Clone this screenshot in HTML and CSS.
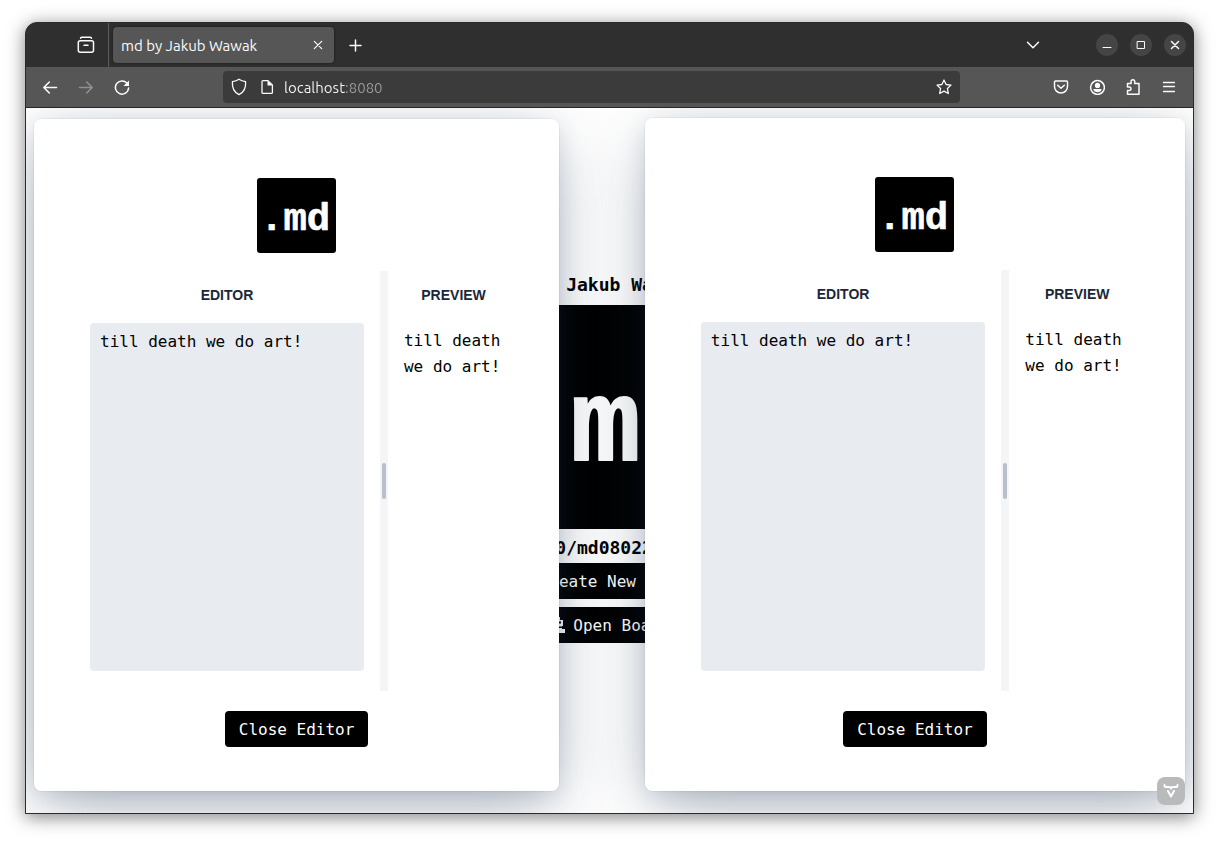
FILE: index.html
```html
<!DOCTYPE html>
<html lang="en">
<head>
<meta charset="utf-8">
<title>md by Jakub Wawak</title>
<link rel="stylesheet" href="styles.css">
</head>
<body>
<div class="window">
  <header class="tabbar">
    <button class="icon-btn recent" aria-label="Recent browsing">
      <svg width="18" height="18" viewBox="0 0 18 18"><path d="M3.5 2.2Q3.9 1.2 5 1.2H13Q14.1 1.2 14.5 2.2"/><rect x="1.3" y="4.7" width="15.2" height="11.5" rx="2"/><path d="M7 9.3h4"/></svg>
    </button>
    <div class="tab">
      <span class="tab-title">md by Jakub Wawak</span>
      <button class="tab-close" aria-label="Close tab"><svg width="10" height="10" viewBox="0 0 10 10"><path d="M1.300 1.300l7.400 7.400M8.700 1.300l-7.400 7.400"/></svg></button>
    </div>
    <button class="icon-btn new-tab" aria-label="New tab"><svg width="14" height="14" viewBox="0 0 14 14"><path d="M7.500 2v11M2 7.500h11"/></svg></button>
    <div class="window-controls">
      <button class="icon-btn tabs-menu" aria-label="List all tabs"><svg width="14" height="14" viewBox="0 0 14 14"><path d="M1.500 4.300L7 9.800l5.500-5.500"/></svg></button>
      <button class="round" aria-label="Minimize"><svg width="10" height="10" viewBox="0 0 10 10"><path d="M1 7.5h8"/></svg></button>
      <button class="round" aria-label="Maximize"><svg width="10" height="10" viewBox="0 0 10 10"><path d="M1.5 1.5h7v7h-7z"/></svg></button>
      <button class="round" aria-label="Close window"><svg width="10" height="10" viewBox="0 0 10 10"><path d="M1.5 1.5l7 7M8.5 1.5l-7 7" stroke-width="1.5"/></svg></button>
    </div>
  </header>
  <nav class="toolbar">
    <button class="icon-btn" aria-label="Back"><svg width="16" height="16" viewBox="0 0 16 16"><path d="M14.500 8.500H1.8M7.300 3L1.800 8.500 7.300 14"/></svg></button>
    <button class="icon-btn dim" aria-label="Forward"><svg width="16" height="16" viewBox="0 0 16 16"><path d="M1.500 8.500h12.700M8.700 3L14.200 8.500 8.700 14"/></svg></button>
    <button class="icon-btn" aria-label="Reload"><svg width="16" height="16" viewBox="0 0 16 16"><path d="M13.6 5A6.6 6.6 0 1 0 14.6 9"/><path class="fill" d="M15 1.500v5.500H9.500z"/></svg></button>
    <div class="urlbar">
      <svg width="16" height="18" viewBox="0 0 16 18"><path d="M8 1.2C10 2.6 12.300 3.300 14.600 3.700C15 9 13.500 14 8 16.600C2.500 14 1 9 1.400 3.700C3.700 3.300 6 2.600 8 1.200Z"/></svg>
      <svg width="14" height="16" viewBox="0 0 14 16"><path d="M3 1.600h5l4.400 4.400v7.400q0 1-1 1H3q-1 0-1-1V2.600q0-1 1-1z"/><path class="fill" d="M7.500 1.500v5h5z"/></svg>
      <input class="url" type="text" aria-label="Address" value="localhost:8080">
      <button class="star" aria-label="Bookmark"><svg width="16" height="16" viewBox="0 0 16 16"><path d="M8 1l2.100 4.500 4.900.6-3.600 3.400.9 5L8 12.100 3.700 14.500l.9-5L1 6.100l4.900-.6z"/></svg></button>
    </div>
    <button class="icon-btn" aria-label="Pocket"><svg width="16" height="16" viewBox="0 0 16 16"><path d="M2.500 2h11q1 0 1 1v4.500a6.500 6.500 0 0 1-13 0V3q0-1 1-1z"/><path d="M4.700 6.200L8 9.300l3.300-3.100"/></svg></button>
    <button class="icon-btn" aria-label="Account"><svg width="16" height="16" viewBox="0 0 16 16"><circle cx="8.500" cy="8.500" r="6.900"/><circle class="fill" cx="8.500" cy="6.400" r="2.600"/><path class="fill" d="M4.300 10h8.400q-.7 3.200-4.200 3.200T4.300 10z"/></svg></button>
    <button class="icon-btn" aria-label="Extensions"><svg width="16" height="18" viewBox="0 0 16 18"><path d="M2.500 5.500h3.600V3.600a1.800 1.800 0 0 1 3.600 0v1.900H14v10.700H2.500v-3.700h1.800a1.600 1.600 0 0 0 0-3.400H2.500z"/></svg></button>
    <button class="icon-btn menu" aria-label="Menu"><svg width="14" height="14" viewBox="0 0 14 14"><path d="M1.500 2.500h11M1.500 6.500h11M1.500 11.500h11"/></svg></button>
  </nav>
  <main class="page">
    <section class="home">
      <h1 class="line">by Jakub Wawak</h1>
      <svg class="hero" viewBox="0 0 79 75" role="img" aria-label=".md"><rect width="79" height="75"/><text x="3" y="52">.md</text></svg>
      <p class="line">1.0/md08022024</p>
      <div class="actions">
        <button class="dark"><svg width="16" height="16" viewBox="0 0 16 16"><path d="M8 2v12M2 8h12"/></svg>Create New Editor</button>
        <button class="dark"><svg width="16" height="16" viewBox="0 0 16 16"><path class="fill" fill-rule="evenodd" d="M3 0h8v3h3v6h-1v3h3v4H0v-4h3zM10 4.500v2h2v-2zM9 9.500v1.500h4V9.500z"/></svg>Open Board</button>
      </div>
    </section>

    <section class="dialog dialog-left" role="dialog" aria-label="Left editor">
      <div class="surface">
        <svg class="logo" viewBox="0 0 79 75" role="img" aria-label=".md"><rect width="79" height="75" rx="3"/><text x="3" y="52">.md</text></svg>
        <div class="split">
          <div class="pane">
            <label class="pane-title" for="left-text">EDITOR</label>
            <textarea class="editor" id="left-text">till death we do art!</textarea>
          </div>
          <div class="splitter"><span class="handle"></span></div>
          <div class="pane">
            <h2 class="pane-title">PREVIEW</h2>
            <p class="preview">till death we do art!</p>
          </div>
        </div>
        <button class="dark">Close Editor</button>
      </div>
    </section>

    <section class="dialog dialog-right" role="dialog" aria-label="Right editor">
      <div class="surface">
        <svg class="logo" viewBox="0 0 79 75" role="img" aria-label=".md"><rect width="79" height="75" rx="3"/><text x="3" y="52">.md</text></svg>
        <div class="split">
          <div class="pane">
            <label class="pane-title" for="right-text">EDITOR</label>
            <textarea class="editor" id="right-text">till death we do art!</textarea>
          </div>
          <div class="splitter"><span class="handle"></span></div>
          <div class="pane">
            <h2 class="pane-title">PREVIEW</h2>
            <p class="preview">till death we do art!</p>
          </div>
        </div>
        <button class="dark">Close Editor</button>
      </div>
    </section>

    <button class="badge" aria-label="Developer tools"><svg width="16" height="16" viewBox="0 0 16 16"><path d="M1.500 2v.8q0 1.200 1.200 1.200H6q2 0 2 1.500Q8 4 10 4h3.300q1.200 0 1.200-1.200V2M5 8l3 5.500L11 8"/></svg></button>
  </main>
</div>
</body>
</html>
```
FILE: styles.css
```css
* { box-sizing: border-box; }

body {
  margin: 0;
  padding: 22px 25px 28px;
  min-height: 100vh;
  display: flex;
  background: #fff;
  font-family: "DejaVu Sans Mono", monospace;
  font-size: 16px;
  color: #000;
}

button, input, textarea { font: inherit; color: inherit; border: 0; padding: 0; margin: 0; }
button { background: none; }
h1, h2, p { margin: 0; }
svg { display: block; flex: none; fill: none; stroke: currentColor; stroke-width: 1.5; stroke-linecap: round; stroke-linejoin: round; }
.fill { fill: currentColor; stroke: none; }

.window {
  flex: 1;
  min-width: 0;
  display: flex;
  flex-direction: column;
  border: 1px solid #2b2b2b;
  border-radius: 12px 12px 0 0;
  overflow: hidden;
  background: #2f2f2f;
  box-shadow: 0 3px 18px rgba(0, 0, 0, 0.5);
}

/* browser chrome */
.tabbar, .toolbar {
  display: flex;
  align-items: center;
  color: #fbfbfe;
  font-family: Ubuntu, "Open Sans", sans-serif;
  font-size: 15px;
}
.tabbar { height: 44px; background: #2f2f2f; }
.toolbar { height: 41px; padding: 0 6px; background: #565656; border-bottom: 1px solid #262626; }
.icon-btn { width: 36px; height: 36px; display: grid; place-items: center; }
.dim { color: #919191; }
.menu svg { stroke-width: 1.3; }
.recent { width: 83px; height: 44px; padding-left: 37px; border-right: 1px solid #5c5c5c; }
.tab {
  width: 221px;
  height: 36px;
  margin-left: 4px;
  padding: 0 11px 0 8px;
  display: flex;
  align-items: center;
  justify-content: space-between;
  background: #565656;
  border-radius: 4px;
  box-shadow: 0 0 3px rgba(0, 0, 0, 0.5);
}
.tab-close svg { stroke-width: 1.2; }
.new-tab { margin-left: 3px; }
.window-controls { display: flex; align-items: center; gap: 12px; margin-left: auto; padding-right: 7px; }
.tabs-menu { margin-right: 33px; }
.round { width: 22px; height: 22px; display: grid; place-items: center; border-radius: 50%; background: #454545; }
.round svg { stroke-width: 1; stroke-linejoin: miter; }

.urlbar {
  flex: 1;
  min-width: 0;
  height: 32px;
  margin: 0 83px;
  padding: 0 8px;
  display: flex;
  align-items: center;
  background: #3b3b3b;
  border-radius: 4px;
}
.urlbar svg { stroke-width: 1.3; }
.urlbar > svg + svg { margin-left: 13px; }
.url {
  flex: 1;
  min-width: 0;
  margin-left: 10px;
  color: transparent;
  background: linear-gradient(90deg, #fbfbfe 61px, #9b9b9d 61px) text;
}

/* page */
.page { position: relative; flex: 1; overflow: hidden; background: #fff; }
.home { height: 100%; padding-top: 163px; display: flex; flex-direction: column; align-items: center; }
.line { font-size: 18px; font-weight: bold; line-height: 28px; }
.hero { height: 224px; margin: 6px 0 5px; }
.actions { margin-top: 1px; display: flex; flex-direction: column; gap: 8px; width: 240px; }

.logo, .hero { stroke: none; }
.logo rect, .hero rect { fill: #000; }
.logo text, .hero text { fill: #fff; stroke: #fff; stroke-width: 0.6; font: bold 39px "Liberation Mono", monospace; }

.dark {
  height: 36px;
  padding: 0 14px;
  display: flex;
  align-items: center;
  justify-content: center;
  gap: 8px;
  background: #000;
  color: #fff;
  border-radius: 4px;
}

.dialog { position: absolute; display: flex; }
.dialog-left { left: 8px; top: 11px; bottom: 22px; width: 45%; }
.dialog-right { right: 8px; top: 10px; bottom: 22px; width: calc(45% + 15px); }
/* every shadow stays beneath every surface */
.dialog::before {
  content: "";
  position: absolute;
  inset: 0;
  z-index: 1;
  border-radius: 8px;
  box-shadow:
    0 0 0 1px hsla(214, 61%, 25%, 0.05),
    0 6px 24px -3px hsla(214, 53%, 23%, 0.16),
    0 18px 64px -8px hsla(214, 47%, 21%, 0.38);
}
.surface {
  position: relative;
  z-index: 2;
  flex: 1;
  min-width: 0;
  padding: 59px 40px 44px;
  display: flex;
  flex-direction: column;
  align-items: center;
  background: #fff;
  border-radius: 8px;
}
.logo { width: 79px; height: 75px; margin-bottom: 18px; }
.split {
  flex: 1;
  align-self: stretch;
  min-height: 0;
  display: grid;
  grid-template-columns: minmax(0, 7fr) 8px minmax(0, 3fr);
  margin-bottom: 20px;
}
.pane { display: flex; flex-direction: column; padding: 0 16px 20px; }
.pane-title {
  padding: 14px 0 18px;
  text-align: center;
  font: bold 14px/20px "Liberation Sans", Arial, sans-serif;
  color: #1a2739;
}
.editor {
  flex: 1;
  width: 100%;
  padding: 6px 10px;
  resize: none;
  line-height: 26px;
  background: #e8ebf0;
  border-radius: 4px;
}
.preview { padding-top: 5px; line-height: 26px; }
.splitter { display: grid; place-items: center; background: #f3f5f7; }
.handle { width: 4px; height: 36px; border-radius: 2px; background: #b9c0cb; }

.badge {
  position: absolute;
  z-index: 3;
  right: 8px;
  bottom: 8px;
  width: 28px;
  height: 28px;
  display: grid;
  place-items: center;
  border-radius: 8px;
  background: #b9babc;
  color: #fff;
}
.badge svg { stroke-width: 2; }
```
